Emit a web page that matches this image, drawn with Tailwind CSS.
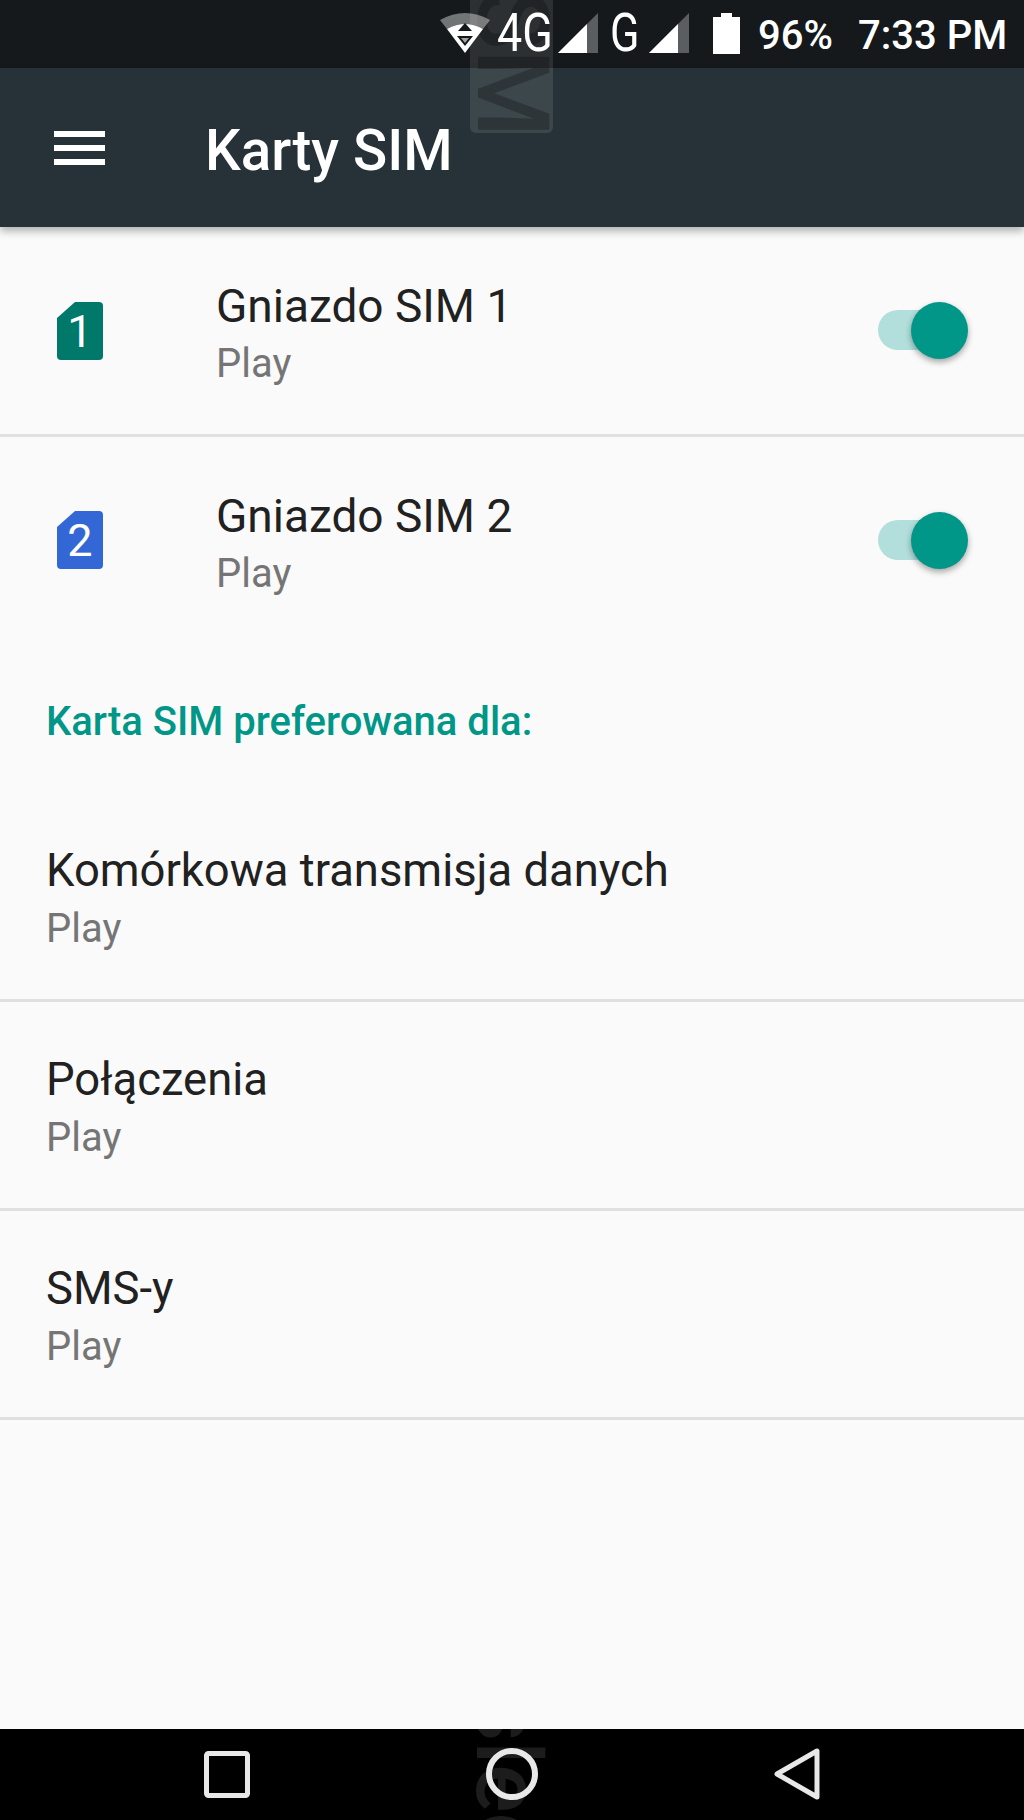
<!DOCTYPE html>
<html lang="pl">
<head>
    <meta charset="UTF-8" />
    <meta name="viewport" content="width=device-width, initial-scale=1.0">
    <title>Karty SIM</title>
    <script src="https://cdn.jsdelivr.net/npm/@tailwindcss/browser@4"></script>
</head>
<body class="bg-[#fafafa] font-['Roboto',sans-serif]">
<div class="relative w-[1024px] h-[1820px] overflow-hidden flex flex-col">
    <!-- status bar -->
    <div class="h-[68px] shrink-0 bg-[#15191c] text-white relative">
        <svg class="absolute left-[440px] top-[13px] z-30" width="50" height="41" viewBox="0 0 50 41">
            <path d="M0 7 Q25 -7 50 7 L43 16 Q25 6 7 16Z" fill="#fff" fill-opacity=".4"/>
            <path d="M7 16 Q25 6 43 16 L25 40Z" fill="#fff"/>
            <path d="M25 10 L32 18 H18Z M17 23 H33 L25 33Z" fill="#15191c"/>
            <path d="M21 25 H29 L25 30Z" fill="#fff" fill-opacity=".6"/>
        </svg>
        <span class="absolute left-[497px] top-[7px] z-30 text-[54px] leading-[52px] origin-left scale-x-[.83]">4G</span>
        <svg class="absolute left-[558px] top-[13px]" width="40" height="40" viewBox="0 0 40 40">
            <path d="M0 40 L40 0 V40Z" fill="#fff" fill-opacity=".3"/>
            <path d="M0 40 L29 11 V40Z" fill="#fff"/>
        </svg>
        <span class="absolute left-[610px] top-[7px] text-[54px] leading-[52px] origin-left scale-x-[.8]">G</span>
        <svg class="absolute left-[649px] top-[13px]" width="40" height="40" viewBox="0 0 40 40">
            <path d="M0 40 L40 0 V40Z" fill="#fff" fill-opacity=".3"/>
            <path d="M0 40 L29 11 V40Z" fill="#fff"/>
        </svg>
        <svg class="absolute left-[713px] top-[13px]" width="27" height="42" viewBox="0 0 27 42">
            <path d="M8 0 H19 V4 H27 V41 H0 V4 H8Z" fill="#fff"/>
        </svg>
        <span class="absolute left-[758px] top-[14px] text-[40px] leading-[44px] font-medium">96%</span>
        <span class="absolute left-[858px] top-[14px] text-[40px] leading-[44px] font-medium">7:33 PM</span>
    </div>

    <!-- app bar -->
    <div class="h-[159px] shrink-0 bg-[#263238] flex items-center shadow-[0_4px_8px_rgba(0,0,0,0.3)] relative z-10">
        <div class="w-[205px] shrink-0 pl-[54px] flex flex-col gap-[8px]">
            <div class="w-[51px] h-[6px] bg-white"></div>
            <div class="w-[51px] h-[6px] bg-white"></div>
            <div class="w-[51px] h-[6px] bg-white"></div>
        </div>
        <h1 class="text-[56.5px] leading-none font-medium text-white pt-[7px]">Karty SIM</h1>
    </div>

    <!-- sim slots -->
    <div class="h-[210px] shrink-0 flex items-center border-b-[3px] border-[#e0e0e0]">
        <div class="w-[216px] shrink-0 pl-[57px]">
            <div class="relative w-[46px] h-[58px]">
                <svg width="46" height="58" viewBox="0 0 46 58"><path d="M18 0 H42 A4 4 0 0 1 46 4 V54 A4 4 0 0 1 42 58 H4 A4 4 0 0 1 0 54 V16Z" fill="#00796b"/></svg>
                <span class="absolute inset-0 pt-[2px] flex items-center justify-center text-white text-[45px]">1</span>
            </div>
        </div>
        <div class="flex-1 pt-[8px]">
            <div class="text-[46px] leading-[58px] text-[#212121]">Gniazdo SIM 1</div>
            <div class="text-[40px] leading-[58px] text-[#757575]">Play</div>
        </div>
        <div class="relative w-[90px] h-[57px] mr-[56px]">
            <div class="absolute left-0 top-[8px] w-[76px] h-[40px] rounded-full bg-[#b2dfdb]"></div>
            <div class="absolute right-0 top-0 w-[57px] h-[57px] rounded-full bg-[#009688] shadow-[0_3px_6px_rgba(0,0,0,0.35)]"></div>
        </div>
    </div>
    <div class="h-[209px] shrink-0 pb-[3px] flex items-center">
        <div class="w-[216px] shrink-0 pl-[57px]">
            <div class="relative w-[46px] h-[58px]">
                <svg width="46" height="58" viewBox="0 0 46 58"><path d="M18 0 H42 A4 4 0 0 1 46 4 V54 A4 4 0 0 1 42 58 H4 A4 4 0 0 1 0 54 V16Z" fill="#3367d6"/></svg>
                <span class="absolute inset-0 pt-[2px] flex items-center justify-center text-white text-[45px]">2</span>
            </div>
        </div>
        <div class="flex-1 pt-[10px]">
            <div class="text-[46px] leading-[58px] text-[#212121]">Gniazdo SIM 2</div>
            <div class="text-[40px] leading-[58px] text-[#757575]">Play</div>
        </div>
        <div class="relative w-[90px] h-[57px] mr-[56px]">
            <div class="absolute left-0 top-[8px] w-[76px] h-[40px] rounded-full bg-[#b2dfdb]"></div>
            <div class="absolute right-0 top-0 w-[57px] h-[57px] rounded-full bg-[#009688] shadow-[0_3px_6px_rgba(0,0,0,0.35)]"></div>
        </div>
    </div>

    <!-- preferred sim -->
    <div class="h-[147px] shrink-0 pl-[46px] pt-[4px] flex items-center text-[40px] font-medium text-[#009688]">Karta SIM preferowana dla:</div>
    <div class="h-[209px] shrink-0 pl-[46px] pt-[8px] flex flex-col justify-center border-b-[3px] border-[#e0e0e0]">
        <div class="text-[45.4px] leading-[58px] text-[#212121]">Komórkowa transmisja danych</div>
        <div class="text-[40px] leading-[58px] text-[#757575]">Play</div>
    </div>
    <div class="h-[209px] shrink-0 pl-[46px] pt-[8px] flex flex-col justify-center border-b-[3px] border-[#e0e0e0]">
        <div class="text-[45.4px] leading-[58px] text-[#212121]">Połączenia</div>
        <div class="text-[40px] leading-[58px] text-[#757575]">Play</div>
    </div>
    <div class="h-[209px] shrink-0 pl-[46px] pt-[8px] flex flex-col justify-center border-b-[3px] border-[#e0e0e0]">
        <div class="text-[45.4px] leading-[58px] text-[#212121]">SMS-y</div>
        <div class="text-[40px] leading-[58px] text-[#757575]">Play</div>
    </div>
    <div class="flex-1"></div>

    <!-- nav bar -->
    <div class="h-[91px] shrink-0 bg-black relative overflow-hidden">
        <span class="absolute left-[462px] top-[-34px] [writing-mode:vertical-rl] text-[90px] leading-none font-medium text-[#1c1c1c] whitespace-nowrap">sleo</span>
        <svg class="absolute left-[204px] top-[22px]" width="46" height="47" viewBox="0 0 46 47">
            <rect x="2.5" y="2.5" width="41" height="42" rx="2" fill="none" stroke="#e8e8e8" stroke-width="5"/>
        </svg>
        <svg class="absolute left-[486px] top-[19px]" width="52" height="52" viewBox="0 0 52 52">
            <circle cx="26" cy="26" r="23" fill="none" stroke="#e8e8e8" stroke-width="6"/>
        </svg>
        <svg class="absolute left-[774px] top-[19px]" width="46" height="52" viewBox="0 0 46 52">
            <path d="M43 3 V49 L3 26Z" fill="none" stroke="#e8e8e8" stroke-width="5" stroke-linejoin="round"/>
        </svg>
    </div>

    <!-- rotated watermark over the bars -->
    <div class="absolute left-[470px] top-[-40px] w-[83px] h-[173px] rounded-[6px] bg-white/10 z-20 flex items-end justify-center overflow-hidden">
        <span class="[writing-mode:vertical-rl] text-[100px] leading-none font-medium text-black/25 whitespace-nowrap -mb-[4px]">SM</span>
    </div>
</div>
</body>
</html>
